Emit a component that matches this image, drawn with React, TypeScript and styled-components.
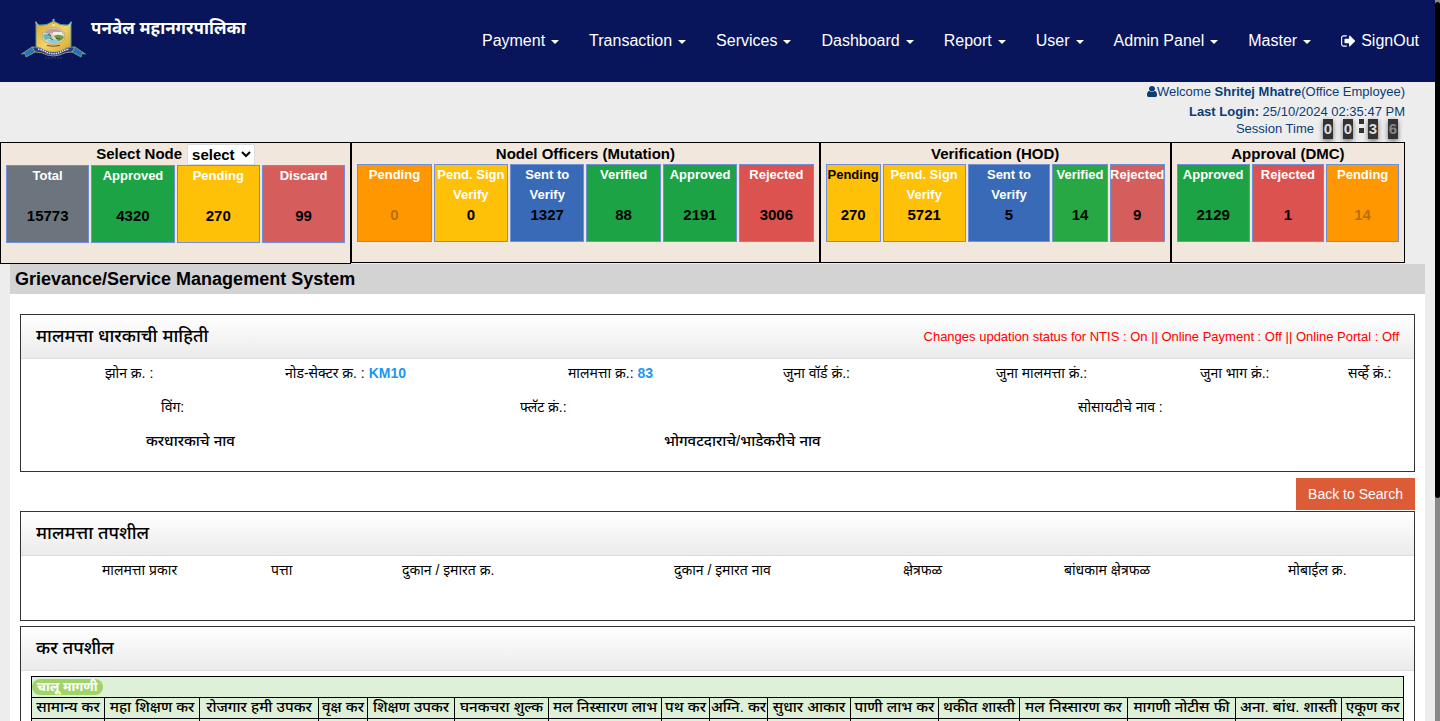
import React from 'react';
import styled, { createGlobalStyle } from 'styled-components';

const Global = createGlobalStyle`
  *, *::before, *::after { box-sizing: border-box; }
  body {
    margin: 0;
    background: #ededed;
    color: #000;
    font-family: "Liberation Sans", Arial, "Noto Sans", sans-serif;
    font-size: 14px;
    line-height: 20px;
  }
  h1, h2 { margin: 0; padding: 0; }
`;

const Page = styled.div`
  position: relative;
  height: 100vh;
  overflow: hidden;
  padding-right: 5px;
`;

const ScrollRail = styled.div`
  position: absolute;
  top: 0;
  right: 0;
  width: 5px;
  height: 100%;
  padding-top: 2px;
  background: #888;
`;

const ScrollThumb = styled.div`
  height: 69%;
  background: #000;
  border-radius: 3px;
`;

const Header = styled.header`
  display: flex;
  justify-content: space-between;
  height: 82px;
  padding: 0 16px 0 20px;
  background: #08155a;
  color: #fff;
`;

const Brand = styled.a`
  display: flex;
  gap: 4px;
  padding-top: 16px;
  color: #fff;
  font-size: 17px;
  font-weight: 700;
  line-height: 26px;
  text-decoration: none;
`;

const Nav = styled.nav`
  display: flex;
  align-items: center;
  gap: 30px;
`;

const NavLink = styled.a`
  display: flex;
  align-items: center;
  gap: 6px;
  color: #fff;
  font-size: 16px;
  text-decoration: none;
`;

const SignOutLink = styled(NavLink)`
  gap: 5px;
`;

const Caret = styled.span`
  border: 4px solid transparent;
  border-top-color: #fff;
  border-bottom: 0;
  margin-top: 2px;
`;

const Session = styled.section`
  display: flex;
  flex-direction: column;
  align-items: flex-end;
  height: 60px;
  padding-right: 30px;
  color: #0b3c78;
  font-size: 13px;
  line-height: 20px;
`;

const SessionTime = styled.div`
  display: flex;
  gap: 9px;
  margin-top: -3px;
  line-height: 20px;
`;

const Clock = styled.div`
  display: flex;
  padding-right: 7px;
`;

const Digit = styled.span<{ $dim?: boolean; $gap?: boolean }>`
  width: 10px;
  height: 20px;
  margin-left: ${(p) => (p.$gap ? 10 : 0)}px;
  background: #333;
  box-shadow: 0 2px 5px rgba(0, 0, 0, 0.5);
  color: ${(p) => (p.$dim ? '#888' : '#ddd')};
  font-size: 15px;
  font-weight: 700;
  line-height: 20px;
  text-align: center;
`;

const Colon = styled.span`
  display: flex;
  flex-direction: column;
  gap: 4px;
  padding: 0 4px 0 6px;
  &::before, &::after {
    content: "";
    width: 5px;
    height: 5px;
    background: #333;
  }
`;

const Stats = styled.section`
  display: grid;
  grid-template-columns: 3fr 4fr 3fr 2fr;
  align-items: start;
  height: 122px;
  padding-right: 30px;
`;

const StatPanel = styled.div<{ $tall?: boolean }>`
  min-width: 0;
  height: ${(p) => (p.$tall ? 122 : 121)}px;
  padding: 0 5px;
  background: #f2e7dd;
  border: 1px solid #000;
`;

const StatTitle = styled.h2<{ $tall?: boolean }>`
  display: flex;
  justify-content: center;
  align-items: center;
  gap: 5px;
  height: ${(p) => (p.$tall ? 22 : 21)}px;
  font-size: 15px;
  white-space: nowrap;
`;

const NodeSelect = styled.select`
  width: 68px;
  height: 21px;
  padding: 0;
  background: #fff;
  border: 1px solid #ddd;
  color: #000;
  font: inherit;
`;

const Cells = styled.div<{ $columns: string }>`
  display: grid;
  grid-template-columns: ${(p) => p.$columns};
  gap: 2px;
`;

const Cell = styled.div<{ $color: string }>`
  display: flex;
  flex-direction: column;
  justify-content: space-between;
  min-width: 0;
  height: 78px;
  padding-bottom: 16px;
  background: ${(p) => p.$color};
  border: 1px solid #6f8fd8;
  font-weight: 700;
  text-align: center;
`;

const CellLabel = styled.span<{ $dark?: boolean }>`
  display: flex;
  justify-content: center;
  color: ${(p) => (p.$dark ? '#000' : '#fff')};
  font-size: 13px;
`;

const CellValue = styled.button`
  padding: 0;
  background: none;
  border: 0;
  color: #000;
  font: inherit;
  font-size: 15px;
  &:disabled { color: rgba(0, 0, 0, 0.3); }
`;

const Main = styled.main`
  margin: 0 10px;
  background: #fff;
`;

const PageTitle = styled.h1`
  height: 30px;
  padding-left: 5px;
  background: #d3d3d3;
  font-size: 18px;
  line-height: 30px;
`;

const Content = styled.div`
  padding: 20px 10px;
`;

const Panel = styled.section<{ $height?: number }>`
  min-height: ${(p) => p.$height ?? 0}px;
  border: 1px solid #333;
`;

const PanelHead = styled.div`
  display: flex;
  justify-content: space-between;
  align-items: center;
  height: 44px;
  padding: 0 15px;
  background: linear-gradient(#fff, #ebebeb);
  border-bottom: 1px solid #ddd;
`;

const PanelTitle = styled.h2`
  padding-bottom: 2px;
  font-size: 18px;
  font-weight: 500;
  line-height: 24px;
`;

const Notice = styled.span`
  color: #f00;
  font-size: 13px;
`;

const Fields = styled.div`
  display: flex;
  flex-direction: column;
  gap: 6px;
`;

const FieldRow = styled.div<{ $columns: string; $inset: number; $strong?: boolean }>`
  display: grid;
  grid-template-columns: ${(p) => p.$columns};
  padding-left: ${(p) => p.$inset}px;
  font-size: ${(p) => (p.$strong ? 15 : 14)}px;
  font-weight: ${(p) => (p.$strong ? 500 : 400)};
  line-height: 28px;
  white-space: nowrap;
`;

const Field = styled.span`
  min-width: 0;
`;

const Value = styled.b`
  color: #2196f3;
`;

const Actions = styled.div`
  display: flex;
  justify-content: flex-end;
  padding: 6px 0 1px;
`;

const BackButton = styled.button`
  height: 32px;
  padding: 0 12px;
  background: #dc5c38;
  border: 0;
  color: #fff;
  font: inherit;
`;

const TaxPanel = styled(Panel)`
  margin-top: 5px;
`;

const TaxTable = styled.table`
  width: calc(100% - 20px);
  margin: 5px 10px;
  table-layout: fixed;
  border-collapse: collapse;
  background: #dff0d8;
  td, th {
    height: 21px;
    padding: 0 0 2px;
    border: 1px solid #000;
    font-size: 15px;
    font-weight: 500;
    line-height: 18px;
    text-align: center;
    white-space: nowrap;
  }
`;

const TaxCol = styled.col<{ $width: number }>`
  width: ${(p) => p.$width}px;
`;

const Tag = styled.span`
  display: block;
  width: max-content;
  height: 16px;
  margin-top: 2px;
  padding: 0 5px;
  background: #a0d468;
  border-radius: 8px;
  color: #fff;
  font-size: 13px;
  font-weight: 700;
  line-height: 16px;
`;

const Logo = () => (
  <svg width="67" height="44" viewBox="0 0 67 44" aria-hidden="true">
    <defs>
      <linearGradient id="gold" x1="0" x2="1" y1="0" y2="1">
        <stop offset="0" stopColor="#d9a62a" />
        <stop offset="0.5" stopColor="#f3d468" />
        <stop offset="1" stopColor="#d39d24" />
      </linearGradient>
    </defs>
    <path d="M16 6 L19 9 Q27 10 33.500 5 Q40 10 48 9 L51 6 V30 Q49 34 33.500 38 Q18 34 16 30Z" fill="url(#gold)" stroke="#4f94ad" />
    <circle cx="16" cy="6.500" r="1" fill="#6bb4cf" />
    <circle cx="33.500" cy="4" r="1.200" fill="#6bb4cf" />
    <circle cx="51" cy="6.500" r="1" fill="#6bb4cf" />
    <path d="M33.500 4 V8" stroke="#6bb4cf" />
    <circle cx="33.500" cy="9" r="1" fill="#fff6c8" />
    <ellipse cx="33.500" cy="20" rx="11.500" ry="8.500" fill="#d8d3b4" stroke="#a99a5e" strokeWidth="0.600" />
    <path d="M24 17 Q28 12 34 13 Q40 13 43 17Z" fill="#c59ba0" />
    <path d="M23 19 L30 17 L32 22 L25 24Z" fill="#64b7bb" />
    <path d="M33 16 H42 V19 H33Z" fill="#f1efe4" />
    <path d="M34 20 Q39 17 44 21 Q42 25 38 25Z" fill="#6c9a3e" />
    <path d="M27 25 Q33 21 40 26 Q33 30 27 25Z" fill="#8fc8d8" />
    <path d="M28 18 l3 2 M36 22 l4 1 M30 22 l3 2" stroke="#42523a" strokeWidth="0.900" />
    <path d="M27 29.500 Q33 31 40 29.500" fill="none" stroke="#5d4a1c" strokeWidth="0.900" />
    <path d="M12 31 L1.500 38 L5 37.500 L6 41 L17 35Z M55 31 L65.500 38 L62 37.500 L61 41 L50 35Z" fill="#2176b5" stroke="#b2b078" strokeWidth="0.700" />
    <path d="M12 31 Q19 30 25 34 Q33.500 38 42 34 Q48 30 55 31 L52 36 Q45 36 40 39 Q33.500 41 27 39 Q22 36 15 36Z" fill="#293c86" stroke="#c3ba73" strokeWidth="0.700" />
    <path d="M18 33 Q23 34 27 36.500 Q33.500 39 40 36.500 Q44 34 49 33" fill="none" stroke="#dfe4ef" strokeWidth="1.600" strokeDasharray="1.500 0.800" />
    <path d="M25 42 H42" stroke="#34406c" strokeDasharray="2 1" />
  </svg>
);

const SignOutIcon = () => (
  <svg width="15" height="16" viewBox="0 0 1664 1792" fill="currentColor" aria-hidden="true">
    <path d="M640 1440q0 4 1 20t.5 26.500-3 23.500-10 19.500-20.500 6.500h-320q-119 0-203.500-84.500t-84.500-203.500v-704q0-119 84.500-203.500t203.500-84.500h320q13 0 22.500 9.500t9.500 22.500q0 4 1 20t.5 26.500-3 23.500-10 19.500-20.500 6.500h-320q-66 0-113 47t-47 113v704q0 66 47 113t113 47h312l11.500 1 11.500 3 8 5.500 7 9 2 13.500zm928-544q0 26-19 45l-544 544q-19 19-45 19t-45-19-19-45v-288h-448q-26 0-45-19t-19-45v-384q0-26 19-45t45-19h448v-288q0-26 19-45t45-19 45 19l544 544q19 19 19 45z" />
  </svg>
);

const UserIcon = () => (
  <svg width="10" height="11" viewBox="256 128 1280 1536" preserveAspectRatio="none" fill="currentColor" aria-hidden="true">
    <path d="M1536 1399q0 109-62.500 187t-150.500 78h-854q-88 0-150.500-78t-62.500-187q0-85 8.500-160.500t31.500-152 58.500-131 94-89 134.500-34.500q131 128 313 128t313-128q76 0 134.500 34.500t94 89 58.500 131 31.500 152 8.500 160.500zm-256-887q0 159-112.500 271.500t-271.500 112.500-271.500-112.500-112.500-271.500 112.500-271.500 271.500-112.500 271.500 112.500 112.500 271.500z" />
  </svg>
);

const Welcome = styled.div`
  svg { vertical-align: -1px; }
`;

const navItems = ['Payment', 'Transaction', 'Services', 'Dashboard', 'Report', 'User', 'Admin Panel', 'Master'];

type Stat = { label: string; value: string; color: string; dark?: boolean; off?: boolean };
type Group = { title: string; columns: string; select?: boolean; stats: Stat[] };
type FieldSet = { columns: string; inset: number; strong?: boolean; items: [string, string?][] };

const green = '#1ca345';
const amber = '#ffc107';
const orange = '#ff9800';
const blue = '#396ab7';
const red = '#db524e';
const rose = '#d55e5c';

const groups: Group[] = [
  {
    title: 'Select Node', columns: 'repeat(4, 1fr)', select: true,
    stats: [
      { label: 'Total', value: '15773', color: '#6c757d' },
      { label: 'Approved', value: '4320', color: green },
      { label: 'Pending', value: '270', color: amber },
      { label: 'Discard', value: '99', color: rose },
    ],
  },
  {
    title: 'Nodel Officers (Mutation)', columns: 'repeat(6, 1fr)',
    stats: [
      { label: 'Pending', value: '0', color: orange, off: true },
      { label: 'Pend. Sign Verify', value: '0', color: amber },
      { label: 'Sent to Verify', value: '1327', color: blue },
      { label: 'Verified', value: '88', color: green },
      { label: 'Approved', value: '2191', color: green },
      { label: 'Rejected', value: '3006', color: red },
    ],
  },
  {
    title: 'Verification (HOD)', columns: '2fr 3fr 3fr 2fr 2fr',
    stats: [
      { label: 'Pending', value: '270', color: amber, dark: true },
      { label: 'Pend. Sign Verify', value: '5721', color: amber },
      { label: 'Sent to Verify', value: '5', color: blue },
      { label: 'Verified', value: '14', color: '#28a745' },
      { label: 'Rejected', value: '9', color: rose },
    ],
  },
  {
    title: 'Approval (DMC)', columns: 'repeat(3, 1fr)',
    stats: [
      { label: 'Approved', value: '2129', color: green },
      { label: 'Rejected', value: '1', color: red },
      { label: 'Pending', value: '14', color: orange, off: true },
    ],
  },
];

const ownerRows: FieldSet[] = [
  {
    columns: '180fr 283fr 215fr 213fr 204fr 148fr 66fr', inset: 84,
    items: [
      ['झोन क्र. :'], ['नोड-सेक्टर क्र. :', 'KM10'], ['मालमत्ता क्र.:', '83'], ['जुना वॉर्ड क्रं.:'],
      ['जुना मालमत्ता क्रं.:'], ['जुना भाग क्रं.:'], ['सर्व्हे क्रं.:'],
    ],
  },
  { columns: '359fr 558fr 336fr', inset: 140, items: [['विंग:'], ['फ्लॅट क्रं.:'], ['सोसायटीचे नाव :']] },
  { columns: '518fr 750fr', inset: 125, strong: true, items: [['करधारकाचे नाव'], ['भोगवटदाराचे/भाडेकरीचे नाव']] },
];

const propertyRows: FieldSet[] = [
  {
    columns: '169fr 131fr 272fr 229fr 161fr 224fr 126fr', inset: 81,
    items: [
      ['मालमत्ता प्रकार'], ['पत्ता'], ['दुकान / इमारत क्र.'], ['दुकान / इमारत नाव'],
      ['क्षेत्रफळ'], ['बांधकाम क्षेत्रफळ'], ['मोबाईल क्र.'],
    ],
  },
];

const taxHeads: [string, number][] = [
  ['सामान्य कर', 73], ['महा शिक्षण कर', 95], ['रोजगार हमी उपकर', 119], ['वृक्ष कर', 49],
  ['शिक्षण उपकर', 87], ['घनकचरा शुल्क', 94], ['मल निस्सारण लाभ', 113], ['पथ कर', 48],
  ['अग्नि. कर', 58], ['सुधार आकार', 83], ['पाणी लाभ कर', 88], ['थकीत शास्ती', 81],
  ['मल निस्सारण कर', 108], ['मागणी नोटीस फी', 108], ['अना. बांध. शास्ती', 106], ['एकूण कर', 62],
];

const FieldRows = ({ rows }: { rows: FieldSet[] }) => (
  <Fields>
    {rows.map((row) => (
      <FieldRow key={row.columns} $columns={row.columns} $inset={row.inset} $strong={row.strong}>
        {row.items.map(([label, value]) => (
          <Field key={label}>{label}{value && <> <Value>{value}</Value></>}</Field>
        ))}
      </FieldRow>
    ))}
  </Fields>
);

export default function App() {
  return (
    <Page>
      <Global />
      <Header>
        <Brand href="#"><Logo />पनवेल महानगरपालिका</Brand>
        <Nav>
          {navItems.map((item) => <NavLink href="#" key={item}>{item}<Caret /></NavLink>)}
          <SignOutLink href="#"><SignOutIcon />SignOut</SignOutLink>
        </Nav>
      </Header>
      <Session>
        <Welcome><UserIcon />Welcome <b>Shritej Mhatre</b>(Office Employee)</Welcome>
        <div><b>Last Login:</b> 25/10/2024 02:35:47 PM</div>
        <SessionTime>
          Session Time
          <Clock><Digit>0</Digit><Digit $gap>0</Digit><Colon /><Digit>3</Digit><Digit $gap $dim>6</Digit></Clock>
        </SessionTime>
      </Session>
      <Stats>
        {groups.map((g) => (
          <StatPanel key={g.title} $tall={g.select}>
            <StatTitle $tall={g.select}>
              {g.select ? (
                <>
                  <label htmlFor="node">{g.title}</label>
                  <NodeSelect id="node"><option>select</option></NodeSelect>
                </>
              ) : g.title}
            </StatTitle>
            <Cells $columns={g.columns}>
              {g.stats.map((s) => (
                <Cell key={s.label} $color={s.color}>
                  <CellLabel $dark={s.dark}>{s.label}</CellLabel>
                  <CellValue disabled={s.off}>{s.value}</CellValue>
                </Cell>
              ))}
            </Cells>
          </StatPanel>
        ))}
      </Stats>
      <Main>
        <PageTitle>Grievance/Service Management System</PageTitle>
        <Content>
          <Panel $height={158}>
            <PanelHead>
              <PanelTitle>मालमत्ता धारकाची माहिती</PanelTitle>
              <Notice>Changes updation status for NTIS : On || Online Payment : Off || Online Portal : Off</Notice>
            </PanelHead>
            <FieldRows rows={ownerRows} />
          </Panel>
          <Actions><BackButton>Back to Search</BackButton></Actions>
          <Panel $height={110}>
            <PanelHead><PanelTitle>मालमत्ता तपशील</PanelTitle></PanelHead>
            <FieldRows rows={propertyRows} />
          </Panel>
          <TaxPanel>
            <PanelHead><PanelTitle>कर तपशील</PanelTitle></PanelHead>
            <TaxTable>
              <colgroup>{taxHeads.map(([name, width]) => <TaxCol key={name} $width={width} />)}</colgroup>
              <tbody>
                <tr><td colSpan={16}><Tag>चालू मागणी</Tag></td></tr>
                <tr>{taxHeads.map(([name]) => <th key={name}>{name}</th>)}</tr>
                <tr>{taxHeads.map(([name]) => <td key={name} />)}</tr>
              </tbody>
            </TaxTable>
          </TaxPanel>
        </Content>
      </Main>
      <ScrollRail><ScrollThumb /></ScrollRail>
    </Page>
  );
}
